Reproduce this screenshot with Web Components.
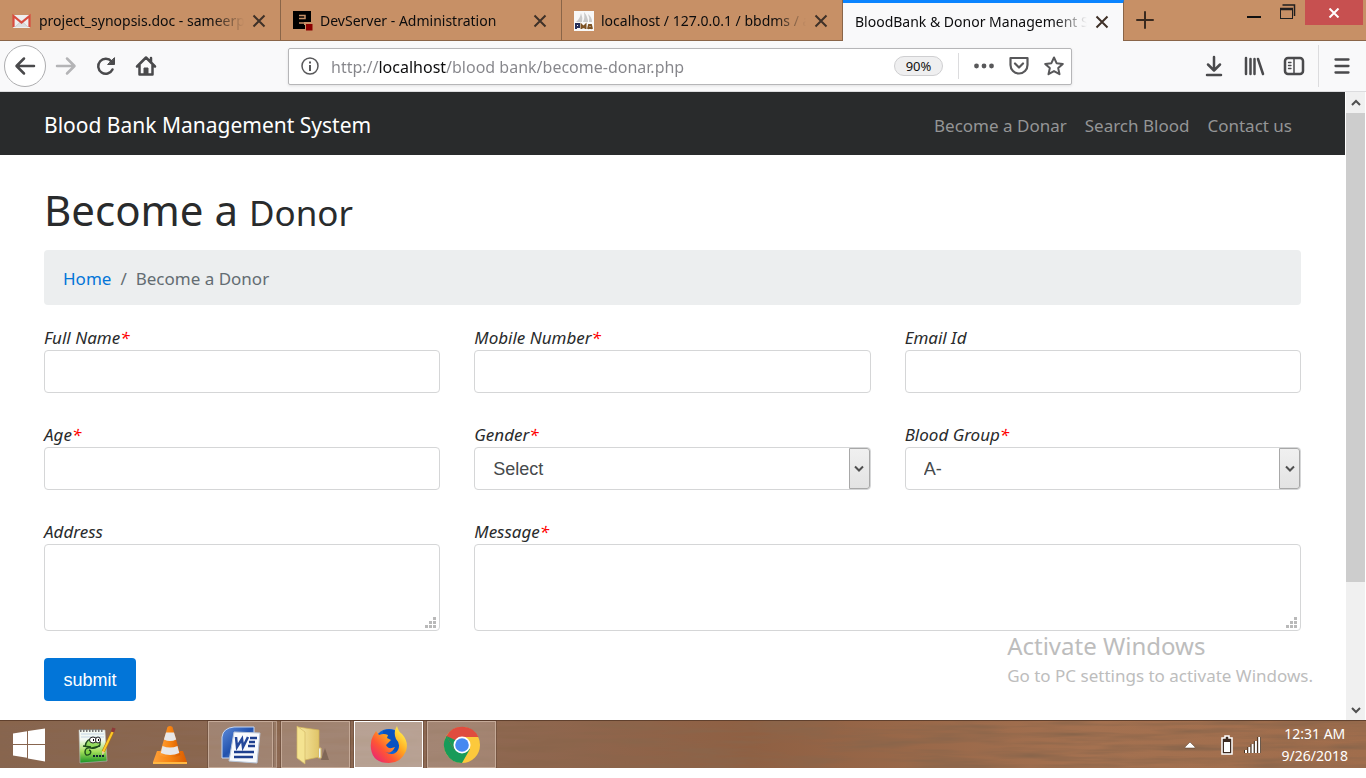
<!DOCTYPE html>
<html lang="en">
<head>
<meta charset="utf-8">
<title>BloodBank &amp; Donor Management System</title>
<style>
  body { margin: 0; min-height: 100vh; background: #fff; color: #292b2c; font: 17px/27px "Noto Sans", "Open Sans", sans-serif; }
</style>
</head>
<body>
<desktop-screen></desktop-screen>
<script>
const reset = '*,*::before,*::after{box-sizing:border-box} button{font:inherit;color:inherit;border:0;background:none;padding:0;margin:0} svg{display:block}';

function element(name, css, html) {
  customElements.define(name, class extends HTMLElement {
    constructor() {
      super();
      const t = document.createElement('template');
      t.innerHTML = `<style>${reset}${css}</style>${typeof html === 'function' ? html(this) : html}`;
      this.attachShadow({ mode: 'open' }).append(t.content.cloneNode(true));
    }
  });
}

/* ---------- browser tabs ---------- */
element('browser-tab', `
  :host{display:flex;align-items:center;flex:0 1 281px;min-width:0;gap:7px;padding:2px 13px 0 12px;border-right:1px solid #8a6548;border-bottom:1px solid #8a6548;font-size:14px;line-height:24px;color:#0c0c0d}
  :host([active]){background:#f9f9fa;border-top:3px solid #0a84ff;border-bottom:0;padding-top:0}
  .label{flex:1;min-width:0;white-space:nowrap;overflow:hidden;-webkit-mask-image:linear-gradient(to left,transparent 0,#000 32px)}
  button{flex:none;width:16px;height:16px;display:grid;place-items:center}
`, `
  <slot name="icon"></slot>
  <span class="label"><slot></slot></span>
  <button aria-label="Close tab"><svg width="14" height="14" viewBox="0 0 14 14"><path d="M1.5 1.5l11 11M12.5 1.5l-11 11" stroke="#3f3128" stroke-width="2"/></svg></button>
`);

element('tab-strip', `
  :host{display:flex;height:41px;background:#c79066;border-bottom:0}
  .tabs{display:flex;flex:0 1 1124px;min-width:0}
  .rest{flex:1;display:flex;align-items:flex-start;border-bottom:1px solid #8a6548;padding-right:3px}
  .new{width:42px;height:40px;display:grid;place-items:center}
  .win{width:34px;height:24px;display:grid;place-items:center}
  .min{margin-left:auto}
  .close{width:58px;height:25px;background:#c75050;display:grid;place-items:center}
`, `
  <div class="tabs">
    <browser-tab><svg slot="icon" width="20" height="20" viewBox="0 0 20 20"><rect x="1" y="4" width="17" height="13" rx="1" fill="#eee"/><path d="M3 16l6.500-6 6.500 6" fill="#ddd" stroke="#ccc"/><path d="M1.500 16V5l8 6.500L17.500 5v11" fill="none" stroke="#d84b3e" stroke-width="2.200"/></svg>project_synopsis.doc - sameerp</browser-tab>
    <browser-tab><svg slot="icon" width="20" height="20" viewBox="0 0 20 20"><path d="M0 0h18v11h-7v3h1v4H0z" fill="#000"/><path d="M6 4.500h6v3H6M6 12h5" fill="none" stroke="#c79066" stroke-width="1.500"/><rect x="12.500" y="12.500" width="7.500" height="7.500" fill="#8b0000" stroke="#c79066"/></svg>DevServer - Administration</browser-tab>
    <browser-tab><svg slot="icon" width="20" height="20" viewBox="0 0 20 20"><rect width="20" height="20" fill="#f8f8f8"/><path d="M2 11Q6 8 7 2q2 5 1 9zM9 11q2-4 1-10 4 5 4 10zM15 11q1-4-1-8 4 3 4 8z" fill="#c9c9c9"/><path d="M2 18v-5h3v3H2" fill="none" stroke="#263059" stroke-width="2"/><path d="M7.500 18v-4l2 2 2-2v4M14 18l1-4h2l1 4M14 17h4" fill="none" stroke="#7d5224" stroke-width="2"/></svg>localhost / 127.0.0.1 / bbdms / a</browser-tab>
    <browser-tab active>BloodBank &amp; Donor Management S</browser-tab>
  </div>
  <div class="rest">
    <button class="new" aria-label="New tab"><svg width="18" height="18" viewBox="0 0 18 18"><path d="M9 1v16M1 9h16" stroke="#3a2a1f" stroke-width="2" stroke-linecap="round"/></svg></button>
    <button class="win min" aria-label="Minimize"><svg width="14" height="14" viewBox="0 0 14 14"><path d="M0 12h14" stroke="#111" stroke-width="2"/></svg></button>
    <button class="win" aria-label="Restore"><svg width="16" height="16" viewBox="0 0 16 16"><path d="M2.500 1h12v11" fill="none" stroke="#1e1e1e" stroke-width="1.500"/><rect x=".5" y="4.500" width="12" height="10" fill="none" stroke="#1e1e1e"/><path d="M0 5h13" stroke="#1e1e1e" stroke-width="2.500"/></svg></button>
    <button class="close" aria-label="Close window"><svg width="12" height="10" viewBox="0 0 12 10"><path d="M1.500.500l9 9M10.500.500l-9 9" stroke="#fff" stroke-width="2"/></svg></button>
  </div>
`);

/* ---------- toolbar ---------- */
element('address-bar', `
  :host{display:flex;align-items:center;height:37px;background:#fff;border:1px solid #b6b6b8;border-radius:2px;box-shadow:0 1px 3px #0000001a}
  button{flex:none;width:35px;height:32px;display:grid;place-items:center}
  .info{width:42px}
  input{flex:1;min-width:0;border:0;outline:0;padding:2px 0 0;height:34px;font:inherit;font-size:16px;-webkit-text-fill-color:transparent;color:#77777a;background:linear-gradient(90deg,#85858a 47px,#0c0c0d 47px,#0c0c0d 115px,#85858a 115px);-webkit-background-clip:text;background-clip:text}
  .zoom{width:49px;height:20px;border-radius:10px;border:1px solid #cfcfd1;background:#efeff0;font-size:13px;line-height:18px;color:#111}
  i{width:1px;height:26px;background:#dcdcde;margin:0 7px 0 15px}
  svg{fill:none;stroke:#58585a;stroke-width:2}
`, `
  <button class="info" aria-label="Site information"><svg width="20" height="20" viewBox="0 0 20 20" style="stroke-width:1.500"><circle cx="10" cy="10" r="8"/><path d="M10 9v6M10 5.500v2" stroke-width="2"/></svg></button>
  <input aria-label="Address" value="http://localhost/blood bank/become-donar.php">
  <button class="zoom">90%</button><i></i>
  <button aria-label="Page actions"><svg width="22" height="6" viewBox="0 0 22 6" style="fill:#58585a;stroke:none"><circle cx="3.500" cy="3" r="2.400"/><circle cx="11" cy="3" r="2.400"/><circle cx="18.500" cy="3" r="2.400"/></svg></button>
  <button aria-label="Save to Pocket"><svg width="22" height="20" viewBox="0 0 22 20"><path d="M2.500 2h17v7a8.500 8.500 0 0 1-17 0z" stroke-linejoin="round" stroke-width="2.200"/><path d="M7 7.500l4 4 4-4" stroke-linecap="round" stroke-linejoin="round" stroke-width="2.200"/></svg></button>
  <button aria-label="Bookmark"><svg width="22" height="22" viewBox="0 0 22 22"><path d="M11 2.500l2.600 5.700 6.200.7-4.600 4.200 1.300 6.100L11 16.100l-5.500 3.100 1.300-6.100L2.200 8.900l6.200-.7z" stroke-linejoin="round"/></svg></button>
`);

element('nav-toolbar', `
  :host{display:flex;align-items:center;height:51px;padding:0 4px;background:#f9f9fa;border-bottom:1px solid #dcdcde}
  button{flex:none;width:40px;height:40px;display:grid;place-items:center}
  .back{width:42px;height:42px;border-radius:50%;border:1px solid #adadaf;background:#fff}
  address-bar{flex:1;margin:0 122px}
  i{width:1px;height:42px;background:#dcdcde;margin:0 3px 0 4px}
  svg{fill:none;stroke:#4a4a4c;stroke-width:2.500;stroke-linecap:round;stroke-linejoin:round}
`, `
  <button class="back" aria-label="Back"><svg width="22" height="20" viewBox="0 0 22 20"><path d="M20 10H3M10 2.500L2.500 10l7.500 7.500"/></svg></button>
  <button aria-label="Forward"><svg width="22" height="20" viewBox="0 0 22 20" style="stroke:#b4b4b6"><path d="M2 10h17M12 2.500l7.500 7.500-7.500 7.500"/></svg></button>
  <button aria-label="Reload"><svg width="22" height="20" viewBox="0 0 22 20"><path d="M17.500 13.500A7.500 7.500 0 1 1 16.500 5.500"/><path d="M19.500 2v6.500H13z" fill="#4a4a4c" stroke-width="1"/></svg></button>
  <button aria-label="Home"><svg width="22" height="22" viewBox="0 0 22 22"><path d="M2 11.500L11 2.500l9 9M4.500 10v9.500h13V10M16 3v4"/><path d="M9 19v-6h4v6z" fill="#4a4a4c" stroke-width="1"/></svg></button>
  <address-bar></address-bar>
  <button aria-label="Downloads"><svg width="18" height="22" viewBox="0 0 18 22"><path d="M9 2v13M3 9.500l6 6 6-6M2 20h14"/></svg></button>
  <button aria-label="Library"><svg width="22" height="20" viewBox="0 0 22 20"><path d="M3 2v16M7.500 3v15M11.500 3v15M15 3l5 15" /></svg></button>
  <button aria-label="Sidebars"><svg width="22" height="20" viewBox="0 0 22 20"><rect x="2" y="2" width="18" height="16" rx="3"/><path d="M11 2v16" stroke-width="1.500"/><path d="M5.500 6.500h2.500M5.500 9.500h2.500M5.500 12.500h2.500" stroke-width="1.300"/></svg></button>
  <i></i>
  <button aria-label="Open menu"><svg width="18" height="16" viewBox="0 0 18 16"><path d="M2.500 1.500h13M2.500 8h13M2.500 14.500h13" stroke-width="2.300"/></svg></button>
`);

/* ---------- web page ---------- */
element('site-navbar', `
  :host{display:flex;align-items:center;justify-content:space-between;height:63px;padding:3px 53px 0 44px;background:#292b2c}
  a{text-decoration:none;color:#949596}
  .brand{font-size:21px;color:#fff}
  nav{display:flex;gap:18px}
`, `
  <a class="brand" href="#">Blood Bank Management System</a>
  <nav><a href="#">Become a Donar</a><a href="#">Search Blood</a><a href="#">Contact us</a></nav>
`);

element('bread-crumb', `
  :host{display:block;background:#eceeef;border-radius:4px;padding:15px 19px 13px}
  ol{display:flex;list-style:none;margin:0;padding:0;color:#636c72}
  li+li::before{content:"/";padding:0 9px}
  a{color:#0275d8;text-decoration:none}
`, `<ol><li><a href="#">Home</a></li><li aria-current="page">Become a Donor</li></ol>`);

element('form-field', `
  :host{display:block;min-width:0}
  label{display:block;font-style:italic;padding-top:1px;height:27px}
  b{font-weight:400;color:#f00}
  .box{display:grid;position:relative}
  input,select,textarea{appearance:none;display:block;width:100%;height:43px;margin:0;padding:0 18px;border:1px solid #d5d6d7;border-radius:4px;background:#fff;color:#464a4c;font:18px/27px "Liberation Sans",Arial,sans-serif;outline:0}
  select{padding-top:2px}
  textarea{height:87px;padding:8px 18px;resize:none}
  .arrow{position:absolute;top:1px;right:1px;bottom:1px;width:21px;border:1px solid #a8a8a8;border-radius:0 3px 3px 0;background:linear-gradient(#f0f0f0,#e3e3e3);display:grid;place-items:center;pointer-events:none}
  .grip{position:absolute;right:4px;bottom:3px;pointer-events:none}
`, (el) => {
  const kind = el.getAttribute('kind') || 'text';
  const star = el.hasAttribute('required') ? '<b>*</b>' : '';
  const control = kind === 'select'
    ? `<select id="c">${el.getAttribute('options').split(',').map(o => `<option>${o}</option>`).join('')}</select>
       <span class="arrow"><svg width="10" height="8" viewBox="0 0 10 8"><path d="M1 1.500l4 4 4-4" fill="none" stroke="#505050" stroke-width="2"/></svg></span>`
    : kind === 'area'
    ? `<textarea id="c"></textarea><svg class="grip" width="12" height="12" viewBox="0 0 12 12" fill="#b9b9b9"><path d="M9 1h3v3H9zM5 5h3v3H5zM9 5h3v3H9zM1 9h3v3H1zM5 9h3v3H5zM9 9h3v3H9z"/></svg>`
    : `<input id="c" type="${kind}">`;
  return `<label for="c">${el.getAttribute('label')}${star}</label><div class="box">${control}</div>`;
});

element('donor-form', `
  :host{display:block}
  form{display:grid;grid-template-columns:repeat(3,minmax(0,1fr));gap:27px 34px}
  .wide{grid-column:span 2}
  button{justify-self:start;width:92px;height:43px;padding-top:2px;border-radius:4px;background:#0275d8;color:#fff;font:18px/27px "Liberation Sans",Arial,sans-serif}
`, `
  <form onsubmit="return false">
    <form-field label="Full Name" required></form-field>
    <form-field label="Mobile Number" kind="tel" required></form-field>
    <form-field label="Email Id" kind="email"></form-field>
    <form-field label="Age" required></form-field>
    <form-field label="Gender" kind="select" options="Select,Male,Female" required></form-field>
    <form-field label="Blood Group" kind="select" options="A-,A+,B-,B+,AB-,AB+,O-,O+" required></form-field>
    <form-field label="Address" kind="area"></form-field>
    <form-field class="wide" label="Message" kind="area" required></form-field>
    <button type="submit">submit</button>
  </form>
`);

element('donor-page', `
  :host{display:block;flex:1;min-width:0}
  main{padding:30px 44px 19px}
  h1{margin:0 0 15px;font-weight:400;font-size:42px;line-height:50px}
  small{font-size:35px;line-height:35px}
  bread-crumb{margin-bottom:18px}
`, `
  <site-navbar></site-navbar>
  <main><h1>Become a <small>Donor</small></h1><bread-crumb></bread-crumb><donor-form></donor-form></main>
`);

element('scroll-rail', `
  :host{display:flex;flex-direction:column;width:20px;margin-left:1px;background:#f0f0f0;border-right:1px solid #fff}
  button{flex:none;height:21px;display:grid;place-items:center}
  .track{flex:1;display:flex}
  .thumb{width:100%;height:80%;background:#cdcdcd}
`, `
  <button aria-label="Scroll up"><svg width="10" height="8" viewBox="0 0 10 8"><path d="M1 6l4-4 4 4" fill="none" stroke="#505050" stroke-width="2"/></svg></button>
  <div class="track"><div class="thumb"></div></div>
  <button aria-label="Scroll down"><svg width="10" height="8" viewBox="0 0 10 8"><path d="M1 2l4 4 4-4" fill="none" stroke="#505050" stroke-width="2"/></svg></button>
`);

element('activation-notice', `
  :host{display:block;color:#bdbdbd;white-space:nowrap;pointer-events:none}
  p{margin:0}
  .big{font-size:24px;line-height:32px}
`, `<p class="big">Activate Windows</p><p>Go to PC settings to activate Windows.</p>`);

/* ---------- taskbar ---------- */
element('task-item', `
  :host{display:flex;flex:none;width:69px;height:47px}
  button{flex:1;height:100%;display:grid;place-items:center;border:1px solid transparent}
  :host([running]) button{border-color:#c5aa98;background:#ffffff30;box-shadow:0 0 0 1px #4b342855}
  :host([current]) button{border-color:#fff;background:#ffffff60;box-shadow:0 0 0 1px #4b342855}
  :host([stacked])::after{content:"";width:4px;border:1px solid #b59a88;border-left:0;background:#ffffff20}
`, (el) => `<button aria-label="${el.getAttribute('label')}"><slot></slot></button>`);

element('task-bar', `
  :host{display:grid;height:48px;overflow:hidden;background:linear-gradient(90deg,#87654f,#8e6a55 30%,#8f6043 55%,#a47150 80%,#a06d4c)}
  .grain,.row{grid-area:1/1}
  .grain{width:100%;height:48px}
  .row{display:flex;align-items:center;gap:4px;position:relative;border-top:1px solid #60402d;min-width:0}
  .start{width:58px;height:47px;display:grid;place-items:center}
  .tray{margin-left:auto;display:flex;align-items:center;color:#fff;font-size:14px;line-height:22px;text-align:center;padding-right:18px}
  .tray svg{margin-right:11px}
  .tray .up{margin-right:26px}
  .clock{margin-left:10px;padding-top:1px}
  .clock div{white-space:nowrap}
`, `
  <svg class="grain" preserveAspectRatio="none"><filter id="wood" x="0" y="0" width="100%" height="100%"><feTurbulence type="fractalNoise" baseFrequency=".012 .16" numOctaves="3" seed="4"/><feColorMatrix values="0 0 0 0 .25  0 0 0 0 .13  0 0 0 0 .07  2 0 0 0 -.75"/></filter><rect width="100%" height="100%" filter="url(#wood)"/></svg>
  <div class="row">
    <button class="start" aria-label="Start"><svg width="34" height="34" viewBox="0 0 34 34" fill="#fff"><path d="M1 5.500l14-2.200V16H1zM16 3.100L33 .5V16H16zM1 17h14v12.700L1 27.500zM16 17h17v16.500l-17-3z"/></svg></button>
    <task-item label="Notepad++"><svg width="38" height="38" viewBox="0 0 38 38"><defs><linearGradient id="np" x2="0" y2="1"><stop offset=".3" stop-color="#f3f9f3"/><stop offset=".65" stop-color="#a4e05a"/><stop offset="1" stop-color="#149024"/></linearGradient></defs><path d="M1 4h26l2 31-27 2z" fill="url(#np)" stroke="#bbb" stroke-width=".6"/><path d="M2 4.500h24" stroke="#777" stroke-width="3" stroke-dasharray="1.500 1.500"/><path d="M3 8h23M3 11h23" stroke="#c5d5e5"/><path d="M7 21q1-9 9-8 7 0 6 6-4 4-9 3-6-1-6 4t5 2q2-3-1-4M5 20l8 1M14 22l8-2" fill="#79d13c" fill-opacity=".7" stroke="#1d4c1c" stroke-width="1.400"/><ellipse cx="15" cy="14" rx="3.500" ry="3" fill="#fff" stroke="#222"/><ellipse cx="20" cy="14" rx="2.500" ry="3" fill="#fff" stroke="#222"/><path d="M15 14h1M20 14h1" stroke="#000" stroke-width="2"/><path d="M15 30h12" stroke="#123" stroke-width="2" stroke-dasharray="2 1"/><path d="M25 26L35 5" stroke="#b27511" stroke-width="3"/><path d="M25 26L35 5" stroke="#ffc928" stroke-width="2"/><path d="M34.500 6l1.500-4" stroke="#8e3939" stroke-width="3.500"/><path d="M24 29l0-4 3 1.500z" fill="#e8d0a0"/></svg></task-item>
    <task-item label="VLC media player"><svg width="36" height="40" viewBox="0 0 36 40"><defs><linearGradient id="vl"><stop stop-color="#ffa13a"/><stop offset=".5" stop-color="#f78412"/><stop offset="1" stop-color="#d95c00"/></linearGradient></defs><path d="M5 26h26l4 11v2H1v-2z" fill="url(#vl)"/><path d="M1 37h34v2H1z" fill="#ffb743"/><path d="M15.500 2q2.500-2 5 0l8 28q-10.500 5-21 0z" fill="url(#vl)"/><path d="M14 7.500h8l2.200 7q-6 3-12.300 0zM10.500 21q7.500 3 15 0l1.800 7q-9 4-18.500 0z" fill="#e7e7e9"/></svg></task-item>
    <task-item label="Microsoft Word" running stacked><svg width="40" height="40" viewBox="0 0 40 40"><defs><linearGradient id="wd" x2="1" y2="1"><stop stop-color="#5e8bd9"/><stop offset=".5" stop-color="#2252ad"/><stop offset="1" stop-color="#82b0ee"/></linearGradient></defs><path d="M1 33V12Q2 3 13 2h20v31z" fill="url(#wd)" stroke="#c4d7f5"/><path d="M13 7l26 1-3 30-28-2z" fill="#f8fafd" stroke="#b8c5d8"/><path d="M15 12l1 10 5-8 1 8 5-10" fill="none" stroke="#23479a" stroke-width="2.500"/><path d="M29 13h7M28 17h6M27 21h7M13 27h20M13 32h19" stroke="#1e3f8e" stroke-width="2.500"/></svg></task-item>
    <task-item label="File Explorer" running><svg width="42" height="40" viewBox="0 0 42 40"><defs><linearGradient id="fl"><stop stop-color="#f7e9a4"/><stop offset="1" stop-color="#e0c468"/></linearGradient></defs><path d="M26 35l4-12 4 12z" fill="#443328" opacity=".35"/><path d="M3 2l21 3v27l-14 3z" fill="url(#fl)" stroke="#d0b158" stroke-width=".7"/><path d="M23.500 23h2.500v10h-2.500z" fill="#eaf3f7" stroke="#d9bd69"/><path d="M2 1l8 6v32l-8-6z" fill="#f4e391" stroke="#d2b765" stroke-width=".7"/></svg></task-item>
    <task-item label="Firefox" running current><svg width="38" height="38" viewBox="0 0 38 38"><defs><linearGradient id="fx" x1="1" y1="0" x2="0" y2="1"><stop offset=".1" stop-color="#fff44f"/><stop offset=".4" stop-color="#ffa620"/><stop offset=".65" stop-color="#ff5634"/><stop offset="1" stop-color="#e31587"/></linearGradient></defs><circle cx="19" cy="18" r="15" fill="#0a63d8"/><path d="M13 5q12-5 18 7l-4 14-12-4z" fill="#0952c0"/><path d="M3 10l3-5 3 4q5-2 9 0l-1 3 4 2-5 5q2 5 9 2-4 8-10 5 9 5 13-2 3-6-2-11-3-7 1-13 1 5 5 8 7 8 4 17-5 12-17 12Q3 37 1 23 0 15 3 10z" fill="url(#fx)"/></svg></task-item>
    <task-item label="Google Chrome" running><svg width="38" height="38" viewBox="0 0 38 38"><circle cx="19" cy="19" r="18" fill="#fcc93c"/><path d="M19 19L3.400 10A18 18 0 0 0 19 37l8-14z" fill="#189b59"/><path d="M3.400 10A18 18 0 0 1 35.500 11H19l-8 12.500z" fill="#df4c3f"/><path d="M3.400 10l8 14 3-9z" fill="#189b59"/><circle cx="19" cy="19" r="8.500" fill="#fff"/><circle cx="19" cy="19" r="6.800" fill="#4688f1"/></svg></task-item>
    <div class="tray">
      <svg class="up" width="10" height="8" viewBox="0 0 10 8"><path d="M0 6l5-5 5 5v1H0z" fill="#fff" stroke="#503828" stroke-width=".5"/></svg>
      <svg width="12" height="20" viewBox="0 0 12 20"><path d="M4 1h4v2h3v16H1V3h3z" fill="#3c2a20" stroke="#fff" stroke-width="1.500"/><path d="M3 7h6v10H3z" fill="#fff"/></svg>
      <svg width="17" height="18" viewBox="0 0 17 18"><path d="M2 17v-3M5.300 17v-6M8.600 17V8M11.900 17V5M15.200 17V1" stroke="#46301f" stroke-width="4"/><path d="M2 17v-3M5.300 17v-6M8.600 17V8M11.900 17V5M15.200 17V1" stroke="#fff" stroke-width="2"/></svg>
      <div class="clock"><div>12:31 AM</div><div>9/26/2018</div></div>
    </div>
  </div>
`);

element('desktop-screen', `
  :host{box-sizing:border-box;display:flex;flex-direction:column;min-height:100vh;padding-bottom:10px}
  .view{flex:1;display:flex;position:relative}
  activation-notice{position:absolute;right:53px;bottom:31px}
`, `
  <tab-strip></tab-strip>
  <nav-toolbar></nav-toolbar>
  <div class="view"><donor-page></donor-page><scroll-rail></scroll-rail><activation-notice></activation-notice></div>
  <task-bar></task-bar>
`);
</script>
</body>
</html>
